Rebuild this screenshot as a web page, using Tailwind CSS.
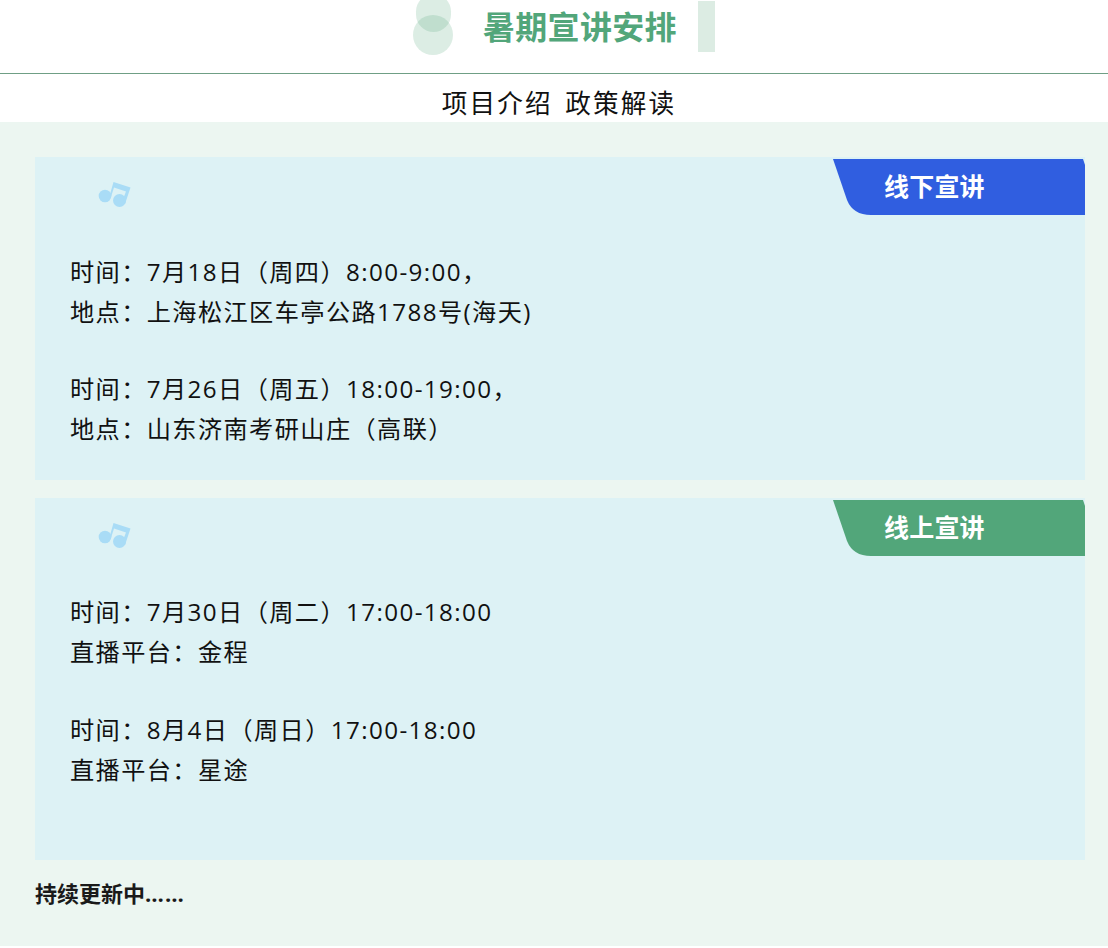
<!DOCTYPE html>
<html lang="zh">
<head>
<meta charset="utf-8">
<title>暑期宣讲安排</title>
<script src="https://cdn.jsdelivr.net/npm/@tailwindcss/browser@4"></script>
</head>
<body class="bg-white text-[#111] font-['Open_Sans','Noto_Sans_CJK_SC',sans-serif]">

<!-- header -->
<header class="relative h-[74px] border-b border-[#6f9f85] overflow-hidden">
    <span class="absolute left-[416px] top-[-6px] w-[35px] h-[38px] rounded-full bg-[#52a67a]/20"></span>
    <span class="absolute left-[413px] top-[15px] w-[40px] h-[40px] rounded-full bg-[#52a67a]/20"></span>
    <h1 class="absolute left-[483px] top-[4px] text-[32px] leading-[46px] font-bold text-[#52a67a] tracking-[0.3px] whitespace-nowrap">暑期宣讲安排</h1>
    <span class="absolute left-[698px] top-[1px] w-[17px] h-[51px] bg-[#dcece3]"></span>
</header>

<nav class="h-[48px] pl-[10px] text-center text-[25.6px] leading-[60px] tracking-[2.1px] [word-spacing:4px]">项目介绍 政策解读</nav>

<main class="bg-[#ecf6f1] pl-[35px] pr-[23px] pt-[35px] h-[824px]">

    <section class="relative bg-[#ddf2f5] h-[323px] pt-[95px] pl-[35px] text-[24.2px] leading-[40px] tracking-[1.4px]">
        <svg class="absolute left-[62px] top-[24px]" width="36" height="28" viewBox="0 0 36 28" fill="#a9dcf6">
            <circle cx="8" cy="15" r="6.3"/>
            <circle cx="22.5" cy="19.5" r="6.5"/>
            <path d="M12.5 15 L16.5 1 L33.5 6.5 L28 23 L26 18 L29 10.5 L17 6.5 L14 16 Z"/>
        </svg>
        <svg class="absolute right-0 top-[2px]" width="252" height="56" viewBox="0 0 252 56">
            <path d="M0 0 H250 L252 6 V56 H38 Q20 56 14 41 Z" fill="#305ee0"/>
        </svg>
        <span class="absolute left-[849px] top-[9px] text-[25px] leading-[40px] font-bold text-white tracking-[0.2px]">线下宣讲</span>
        <p>时间：7月18日（周四）8:00-9:00，</p>
        <p>地点：上海松江区车亭公路1788号(海天)</p>
        <div class="h-[37px]"></div>
        <p>时间：7月26日（周五）18:00-19:00，</p>
        <p>地点：山东济南考研山庄（高联）</p>
    </section>

    <section class="relative bg-[#ddf2f5] h-[362px] mt-[18px] pt-[94px] pl-[35px] text-[24.2px] leading-[40px] tracking-[1.4px]">
        <svg class="absolute left-[62px] top-[24px]" width="36" height="28" viewBox="0 0 36 28" fill="#a9dcf6">
            <circle cx="8" cy="15" r="6.3"/>
            <circle cx="22.5" cy="19.5" r="6.5"/>
            <path d="M12.5 15 L16.5 1 L33.5 6.5 L28 23 L26 18 L29 10.5 L17 6.5 L14 16 Z"/>
        </svg>
        <svg class="absolute right-0 top-[2px]" width="252" height="56" viewBox="0 0 252 56">
            <path d="M0 0 H250 L252 6 V56 H38 Q20 56 14 41 Z" fill="#52a67a"/>
        </svg>
        <span class="absolute left-[849px] top-[9px] text-[25px] leading-[40px] font-bold text-white tracking-[0.2px]">线上宣讲</span>
        <p>时间：7月30日（周二）17:00-18:00</p>
        <p>直播平台：金程</p>
        <div class="h-[38px]"></div>
        <p>时间：8月4日（周日）17:00-18:00</p>
        <p>直播平台：星途</p>
    </section>

    <p class="mt-[18px] text-[22px] leading-[30px] font-bold text-[#1a1a1a]">持续更新中<span class="tracking-[1.1px]">……</span></p>
</main>

</body>
</html>
